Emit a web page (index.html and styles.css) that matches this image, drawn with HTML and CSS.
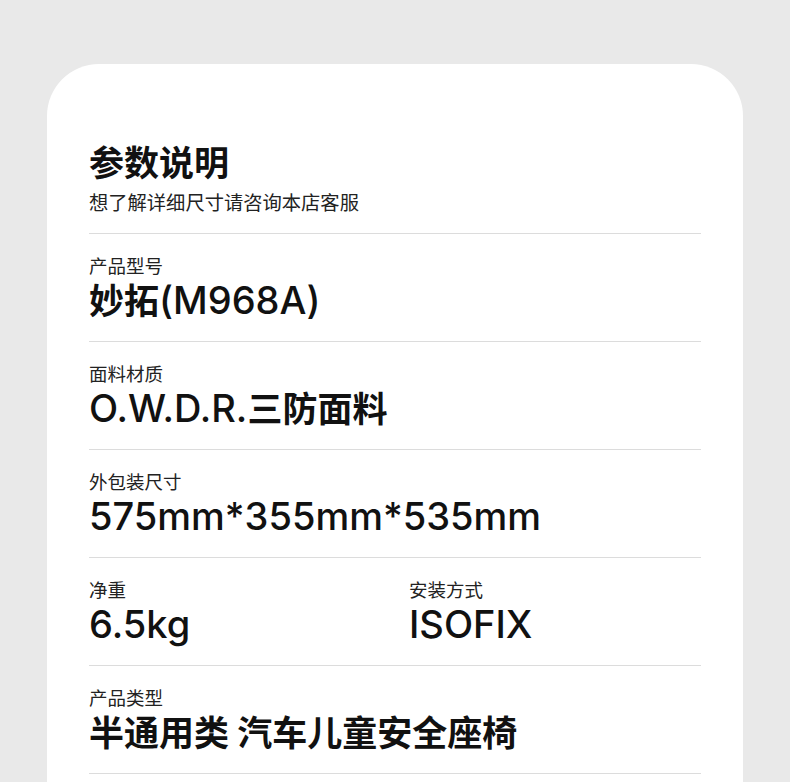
FILE: index.html
```html
<!DOCTYPE html>
<html lang="zh-CN">
<head>
  <meta charset="UTF-8" />
  <meta name="viewport" content="width=device-width, initial-scale=1" />
  <title>参数说明</title>
  <link rel="stylesheet" href="styles.css">
</head>
<body>

<main class="tarjeta">
  <h1>参数说明</h1>
  <p class="sub">想了解详细尺寸请咨询本店客服</p>

  <div class="fila">
    <div class="campo">
      <span class="etiqueta">产品型号</span>
      <span class="valor"><b>妙拓</b>(M968A)</span>
    </div>
  </div>

  <div class="fila">
    <div class="campo">
      <span class="etiqueta">面料材质</span>
      <span class="valor">O.W.D.R.<b>三防面料</b></span>
    </div>
  </div>

  <div class="fila">
    <div class="campo">
      <span class="etiqueta">外包装尺寸</span>
      <span class="valor">575mm*355mm*535mm</span>
    </div>
  </div>

  <div class="fila doble">
    <div class="campo">
      <span class="etiqueta">净重</span>
      <span class="valor">6.5kg</span>
    </div>
    <div class="campo">
      <span class="etiqueta">安装方式</span>
      <span class="valor">ISOFIX</span>
    </div>
  </div>

  <div class="fila">
    <div class="campo">
      <span class="etiqueta">产品类型</span>
      <span class="valor"><b>半通用类 汽车儿童安全座椅</b></span>
    </div>
  </div>

  <div class="fila"></div>
</main>

</body>
</html>
```

FILE: styles.css
```css
* { box-sizing: border-box; }
body {
  margin: 0;
  background-color: #e9e9e9;
  font-family: Inter, "Noto Sans CJK SC", sans-serif;
  color: #111;
  padding-top: 64px;
}
.tarjeta {
  width: 696px;
  margin: 0 auto;
  background: white;
  border-radius: 52px 52px 0 0;
  padding: 77px 42px 80px;
}
h1 {
  margin: 0;
  font-size: 35px;
  line-height: 44px;
  font-weight: bold;
}
.sub {
  margin: 6px 0 18px;
  font-size: 19.3px;
  line-height: 24px;
  color: #222;
}
.fila {
  border-top: 1px solid #dcdcdc;
  padding: 20px 0 19px;
  height: 108px;
}
.doble {
  display: grid;
  grid-template-columns: 320px 1fr;
}
.campo {
  display: flex;
  flex-direction: column;
}
.etiqueta {
  font-size: 18.5px;
  line-height: 24px;
  color: #222;
}
.valor {
  font-size: 38px;
  line-height: 44px;
  font-weight: 500;
  color: #111;
}
.valor b {
  font-size: 35px;
  font-weight: bold;
}
```
